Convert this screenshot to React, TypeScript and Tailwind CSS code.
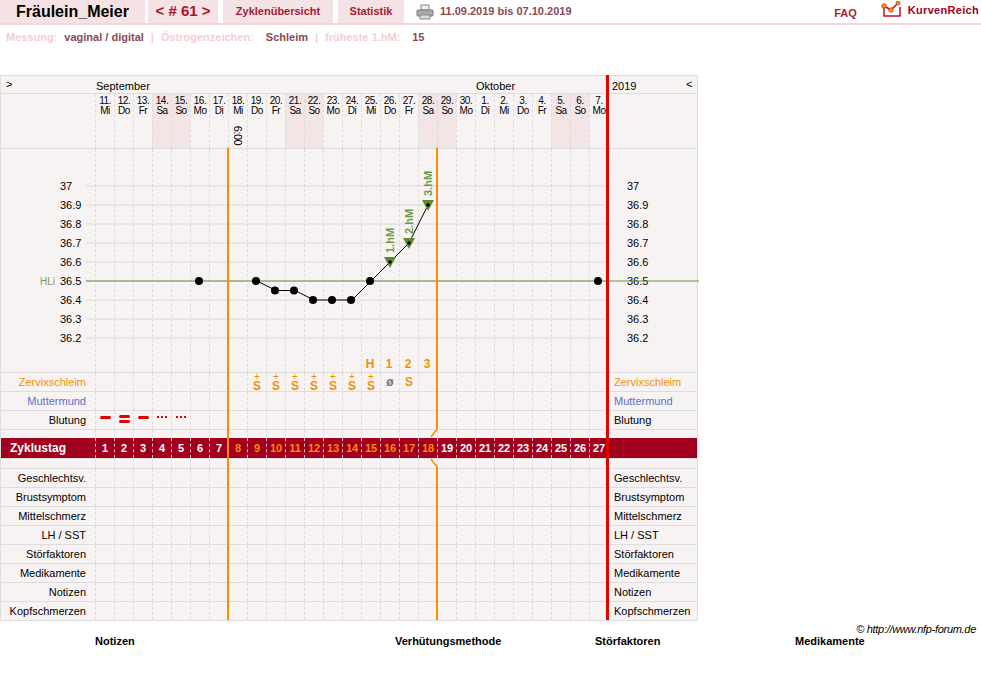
import React from "react";

const days = [
  ["11.", "Mi"], ["12.", "Do"], ["13.", "Fr"], ["14.", "Sa"], ["15.", "So"], ["16.", "Mo"], ["17.", "Di"],
  ["18.", "Mi"], ["19.", "Do"], ["20.", "Fr"], ["21.", "Sa"], ["22.", "So"], ["23.", "Mo"], ["24.", "Di"],
  ["25.", "Mi"], ["26.", "Do"], ["27.", "Fr"], ["28.", "Sa"], ["29.", "So"], ["30.", "Mo"], ["1.", "Di"],
  ["2.", "Mi"], ["3.", "Do"], ["4.", "Fr"], ["5.", "Sa"], ["6.", "So"], ["7.", "Mo"],
];
const weekend = new Set([3, 4, 10, 11, 17, 18, 24, 25]);
const idx = Array.from({ length: 27 }, (_, i) => i);

function Row({
  h, left, right, leftCls = "", rightCls = "", cell,
}: {
  h: string; left?: React.ReactNode; right?: React.ReactNode; leftCls?: string; rightCls?: string;
  cell?: (i: number) => React.ReactNode;
}) {
  return (
    <div className={`flex border-t border-[#dddddd] ${h}`}>
      <div className={`w-[94px] shrink-0 flex items-center justify-end pr-[9px] ${leftCls}`}>{left}</div>
      {idx.map((i) => (
        <div key={i} className="w-[19px] shrink-0 border-l border-dashed border-[#dcdcdc] flex items-center justify-center">
          {cell ? cell(i) : null}
        </div>
      ))}
      <div className={`flex-1 flex items-center pl-[5px] border-l border-[#dddddd] ${rightCls}`}>{right}</div>
    </div>
  );
}

const y = (t: number) => 37 + (37 - t) * 190;
const xc = (i: number) => 104 + i * 19;
const pts: [number, number][] = [[8, 36.5], [9, 36.45], [10, 36.45], [11, 36.4], [12, 36.4], [13, 36.4], [14, 36.5], [15, 36.6], [16, 36.7], [17, 36.9]];
const temps = [37, 36.9, 36.8, 36.7, 36.6, 36.5, 36.4, 36.3, 36.2];

export default function App() {
  const font = { fontFamily: '"Liberation Sans", Arial, sans-serif' };
  const bottomRows = ["Geschlechtsv.", "Brustsymptom", "Mittelschmerz", "LH / SST", "Störfaktoren", "Medikamente", "Notizen", "Kopfschmerzen"];
  return (
    <div className="w-[981px] h-[699px] bg-white text-[11px] text-black relative" style={font}>
      <div className="flex items-stretch h-[25px] border-b-2 border-[#f1d6da]">
        <div className="w-[145px] bg-[#f4e2e4] flex items-center pl-[16px] text-[16px] font-bold">Fräulein_Meier</div>
        <div className="ml-[3px] w-[70px] bg-[#f4e2e4] flex items-center justify-center text-[15px] font-bold text-[#b0102c]">&lt; # 61 &gt;</div>
        <div className="ml-[5px] w-[110px] bg-[#f4e2e4] flex items-center justify-center text-[11px] font-bold text-[#a51c36]">Zyklenübersicht</div>
        <div className="ml-[5px] w-[66px] bg-[#f4e2e4] flex items-center justify-center text-[11px] font-bold text-[#a51c36]">Statistik</div>
        <div className="ml-[12px] flex items-center">
          <svg width="18" height="16" viewBox="0 0 18 16">
            <rect x="5" y="1" width="8" height="5" fill="#eee" stroke="#888" />
            <rect x="1" y="6" width="16" height="6" rx="1" fill="#aaa" stroke="#777" />
            <rect x="4" y="11" width="10" height="4" fill="#ddd" stroke="#888" />
          </svg>
          <span className="ml-[6px] font-bold text-[#8a4a55]">11.09.2019 bis 07.10.2019</span>
        </div>
        <div className="flex-1" />
        <div className="flex items-center font-bold text-[#a51c36] mr-[24px] mt-[4px]">FAQ</div>
        <div className="flex items-start mr-[2px]">
          <svg width="22" height="18" viewBox="0 0 22 18" className="mt-[1px]">
            <path d="M3 6 L3 15 L19 15 L19 6" fill="none" stroke="#c0102c" strokeWidth="1.5" />
            <path d="M3 5 L10 9 L17 2" fill="none" stroke="#c0102c" strokeWidth="1.5" />
            <circle cx="3" cy="5" r="2.3" fill="#f39a00" stroke="#c0102c" strokeWidth="0.6" />
            <circle cx="10" cy="9" r="2.3" fill="#f39a00" stroke="#c0102c" strokeWidth="0.6" />
            <circle cx="17" cy="2" r="2" fill="#f39a00" stroke="#c0102c" strokeWidth="0.6" />
          </svg>
          <span className="ml-[5px] mt-[2px] font-bold text-[#a0001e] text-[11px] tracking-[0.3px]">KurvenReich</span>
        </div>
      </div>
      <div className="flex gap-[7px] pl-[6px] mt-[4px] text-[11px] font-bold">
        <span className="text-[#f6cdd2]">Messung:</span>
        <span className="text-[#8a4a55]">vaginal / digital</span>
        <span className="text-[#f6cdd2]">|</span>
        <span className="text-[#f6cdd2]">Östrogenzeichen:</span>
        <span className="text-[#8a4a55] ml-[5px]">Schleim</span>
        <span className="text-[#f6cdd2]">|</span>
        <span className="text-[#f6cdd2]">früheste 1.hM:</span>
        <span className="text-[#8a4a55] ml-[5px]">15</span>
      </div>

      <div className="absolute left-0 top-[75px] w-[698px] bg-[#f8f3f3] border-r border-b border-l border-[#dddddd]">
        <div className="flex h-[18px] border-t border-[#dddddd] items-center relative">
          <span className="absolute left-[5px] top-0">&gt;</span>
          <span className="absolute left-[95px] top-[2px]">September</span>
          <span className="absolute left-[475px] top-[2px]">Oktober</span>
          <span className="absolute left-[611px] top-[2px]">2019</span>
          <span className="absolute left-[685px] top-0">&lt;</span>
        </div>
        <div className="flex h-[55px] border-t border-[#dddddd]">
          <div className="w-[94px] shrink-0" />
          {idx.map((i) => (
            <div key={i} className={`w-[19px] shrink-0 border-l border-dashed border-[#dcdcdc] flex flex-col items-center pt-[2px] leading-[10px] text-[10px] tracking-[-0.5px] relative ${weekend.has(i) ? "bg-[#f3e4e6]" : ""}`}>
              <span>{days[i][0]}</span>
              <span>{days[i][1]}</span>
              {i === 7 && (
                <span className="absolute top-[36px] left-[-1px] rotate-90 origin-center text-[11px] leading-[11px]">6:00</span>
              )}
            </div>
          ))}
          <div className="flex-1 border-l border-[#dddddd]" />
        </div>
        <div className="relative h-[224px] border-t border-[#dddddd] flex">
          <div className="w-[94px] shrink-0" />
          {idx.map((i) => (
            <div key={i} className="w-[19px] shrink-0 border-l border-dashed border-[#dcdcdc]" />
          ))}
          <svg className="absolute left-0 top-0" width="698" height="224" style={font}>
            {temps.map((t) => (
              <g key={t}>
                <line x1="85" x2="608" y1={y(t)} y2={y(t)} stroke="#d8d8d8" />
                <text x="59" y={y(t) + 4} fontSize="11">{t === 37 ? "37" : t.toFixed(1)}</text>
                <text x="626" y={y(t) + 4} fontSize="11">{t === 37 ? "37" : t.toFixed(1)}</text>
              </g>
            ))}
            <line x1="85" x2="698" y1={y(36.5)} y2={y(36.5)} stroke="#6b9040" />
            <text x="39" y={y(36.5) + 4} fontSize="10" fill="#7a9a5a">HLi</text>
            <polyline fill="none" stroke="#000" strokeWidth="1" points={pts.map(([i, t]) => `${xc(i)},${y(t)}`).join(" ")} />
            {[5, 8, 9, 10, 11, 12, 13, 14].map((i) => {
              const t = i === 5 ? 36.5 : pts.find((p) => p[0] === i)![1];
              return <circle key={i} cx={xc(i) - 1} cy={y(t)} r="4" fill="#000" />;
            })}
            <circle cx={xc(26) - 1} cy={y(36.5)} r="4" fill="#000" />
            {[[15, 36.6, "1.hM"], [16, 36.7, "2.hM"], [17, 36.9, "3.hM"]].map(([i, t, l]) => {
              const cx = xc(i as number), cy = y(t as number);
              return (
                <g key={l as string}>
                  <polygon points={`${cx - 6},${cy - 5} ${cx + 6},${cy - 5} ${cx},${cy + 6}`} fill="#5f8a2f" />
                  <circle cx={cx} cy={cy} r="1.8" fill="#000" />
                  <text x={cx + 4} y={cy - 9} fontSize="11" fontWeight="bold" fill="#6d9a45" transform={`rotate(-90 ${cx + 4} ${cy - 9})`}>{l as string}</text>
                </g>
              );
            })}
            {[["H", 14], ["1", 15], ["2", 16], ["3", 17]].map(([l, i]) => (
              <text key={l as string} x={xc(i as number) - 1} y="219" textAnchor="middle" fontSize="12" fontWeight="bold" fill="#f39000">{l as string}</text>
            ))}
          </svg>
        </div>
        <Row h="h-[19px]" left="Zervixschleim" right="Zervixschleim" leftCls="text-[#f39000]" rightCls="text-[#f39000]"
          cell={(i) =>
            i >= 8 && i <= 14 ? (
              <div className="flex flex-col items-center text-[#f39000] font-bold leading-[8px]">
                <span className="text-[10px] font-normal">+</span>
                <span className="text-[12px] leading-[11px]">S</span>
              </div>
            ) : i === 15 ? <span className="text-[#8a6a70] font-bold text-[12px]">ø</span> : i === 16 ? <span className="text-[#f39000] font-bold text-[12px]">S</span> : null
          } />
        <Row h="h-[19px]" left="Muttermund" right="Muttermund" leftCls="text-[#5a70d0]" rightCls="text-[#5a70d0]" />
        <Row h="h-[19px]" left="Blutung" right="Blutung"
          cell={(i) =>
            i === 0 || i === 2 ? <div className="w-[11px] h-[3px] rounded-full bg-[#e00000] -mt-[6px]" />
              : i === 1 ? <div className="flex flex-col gap-[2px] -mt-[3px]"><div className="w-[11px] h-[3px] rounded-full bg-[#e00000]" /><div className="w-[11px] h-[3px] rounded-full bg-[#e00000]" /></div>
              : i === 3 || i === 4 ? <div className="flex gap-[2px] -mt-[6px]"><div className="w-[2px] h-[2px] bg-[#e00000]" /><div className="w-[2px] h-[2px] bg-[#e00000]" /><div className="w-[2px] h-[2px] bg-[#e00000]" /></div>
              : null
          } />
        <Row h="h-[9px]" />
        <div className="flex h-[20px] bg-[#a0001e] font-bold text-[11px]">
          <div className="w-[94px] shrink-0 flex items-center pl-[9px] text-white text-[12px]">Zyklustag</div>
          {idx.map((i) => (
            <div key={i} className={`w-[19px] shrink-0 border-l border-dashed border-[#e8c0c6] flex items-center justify-center ${i >= 7 && i <= 17 ? "text-[#ff8c00]" : "text-white"}`}>{i + 1}</div>
          ))}
          <div className="flex-1" />
        </div>
        <Row h="h-[10px]" />
        {bottomRows.map((r) => <Row key={r} h="h-[19px]" left={r} right={r} />)}

        <div className="absolute left-[226px] top-[73px] bottom-0 w-[2px] bg-[#ff8c00]" />
        <div className="absolute left-[435px] top-[73px] h-[281px] w-[2px] bg-[#ff8c00]" />
        <div className="absolute left-[435px] top-[392px] bottom-0 w-[2px] bg-[#ff8c00]" />
        <svg className="absolute left-[425px] top-[354px]" width="14" height="40">
          <line x1="11" y1="0" x2="5" y2="8" stroke="#ff8c00" strokeWidth="1.5" />
          <line x1="5" y1="30" x2="11" y2="38" stroke="#ff8c00" strokeWidth="1.5" />
        </svg>
        <div className="absolute left-[605px] top-0 bottom-0 w-[3px] bg-[#e00000]" />
      </div>

      <div className="absolute right-[5px] top-[621px] italic text-[11px] tracking-[-0.3px]">© http://www.nfp-forum.de</div>
      <div className="absolute top-[633px] left-[95px] font-bold">Notizen</div>
      <div className="absolute top-[633px] left-[395px] font-bold">Verhütungsmethode</div>
      <div className="absolute top-[633px] left-[595px] font-bold">Störfaktoren</div>
      <div className="absolute top-[633px] left-[795px] font-bold">Medikamente</div>
    </div>
  );
}
